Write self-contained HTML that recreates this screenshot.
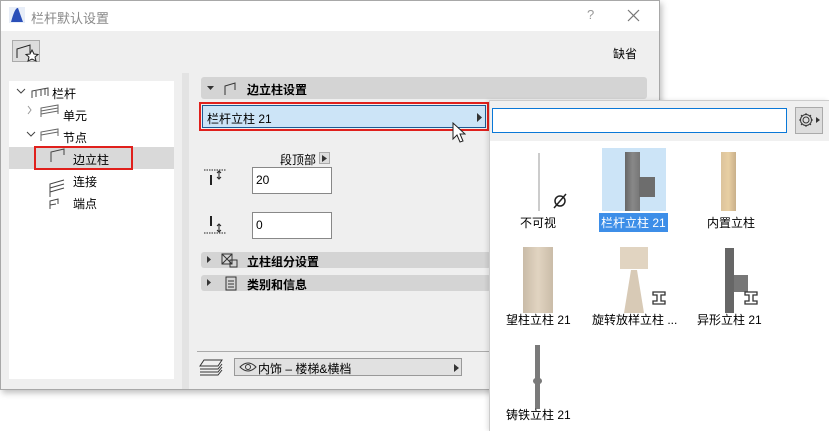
<!DOCTYPE html>
<html><head><meta charset="utf-8"><style>
*{box-sizing:border-box;margin:0;padding:0}
body{width:829px;height:431px;background:#fff;position:relative;overflow:hidden;font-family:"Liberation Sans","Noto Sans CJK SC",sans-serif;font-size:12px;color:#000}
.a{position:absolute}
.t{font-size:12px;white-space:nowrap}
.b{font-weight:bold}
</style></head><body>
<!-- dialog -->
<div class="a" style="left:0;top:0;width:660px;height:390px;background:#efefef;border:1px solid #a8a8a8;box-shadow:2px 3px 6px rgba(0,0,0,.25)"></div>
<div class="a" style="left:1px;top:1px;width:658px;height:30px;background:#fff"></div>
<svg class="a" style="left:9px;top:7px" width="16" height="16"><rect width="16" height="16" fill="#e8eef8"/><path d="M2 15 Q6 0 9 1 L14 15Z" fill="#2a4fb8"/></svg>
<div class="a t" style="left:31px;top:8px;color:#888;font-size:13px">栏杆默认设置</div>
<div class="a t" style="left:587px;top:7px;color:#999;font-size:13px">?</div>
<svg class="a" style="left:627px;top:9px" width="13" height="13"><path d="M1 1L12 12M12 1L1 12" stroke="#777" stroke-width="1.2"/></svg>
<div class="a" style="left:12px;top:40px;width:28px;height:22px;background:#ddd;border:1px solid #aaa"></div>
<svg class="a" style="left:13px;top:41px" width="27" height="21"><path d="M4 17V8L17 4V12" stroke="#222" fill="none"/><path d="M19 9l2 4 4 .5-3 2.5 1 4-4-2-4 2 1-4-3-2.5 4-.5z" fill="#fff" stroke="#222"/></svg>
<div class="a t b" style="left:613px;top:45px;font-weight:normal">缺省</div>
<!-- tree -->
<div class="a" style="left:9px;top:81px;width:165px;height:298px;background:#fff"></div>
<div class="a" style="left:182px;top:73px;width:7px;height:316px;background:#e3e3e3"></div>
<div class="a" style="left:9px;top:147px;width:165px;height:22px;background:#d9d9d9"></div>
<div class="a" style="left:34px;top:146px;width:99px;height:24px;border:2px solid #e0201c"></div>
<svg class="a" style="left:14px;top:84px" width="170" height="130" fill="none" stroke="#444">
<path d="M3 5l4 4 4-4"/><path d="M18 14V7l16-3v8M22 7v6M27 6v6M31 5v6" stroke-width="1"/>
<path d="M14 22l3 4-3 4" stroke="#999"/><path d="M27 33V24l17-3v9M27 27l17-3M27 30l17-3" stroke="#666"/>
<path d="M13 48l4 4 4-4"/><path d="M27 57V48l17-3v7M27 51l17-3" stroke="#666"/>
<path d="M37 78V68l13-3v6"/>
<path d="M36 113V100l14-4M36 104l14-4M36 108l14-4"/>
<path d="M36 125V117l8-2v5M36 121l6-1" />
</svg>
<div class="a t" style="left:52px;top:85px">栏杆</div>
<div class="a t" style="left:63px;top:107px">单元</div>
<div class="a t" style="left:63px;top:129px">节点</div>
<div class="a t" style="left:73px;top:151px">边立柱</div>
<div class="a t" style="left:73px;top:173px">连接</div>
<div class="a t" style="left:73px;top:195px">端点</div>
<!-- right panel -->
<div class="a" style="left:201px;top:77px;width:446px;height:22px;background:#d4d4d4;border-radius:3px"></div>
<svg class="a" style="left:205px;top:80px" width="40" height="16"><path d="M2 6h7l-3.5 4z" fill="#333"/><path d="M20 15V6l10-3v7" stroke="#333" fill="none"/></svg>
<div class="a t b" style="left:247px;top:81px">边立柱设置</div>
<div class="a" style="left:199px;top:102px;width:290px;height:29px;border:2px solid #e0201c"></div>
<div class="a" style="left:202px;top:105px;width:284px;height:23px;background:#cce4f7;border:1px solid #1c5b94"></div>
<div class="a t" style="left:207px;top:110px">栏杆立柱 21</div>
<svg class="a" style="left:477px;top:113px" width="6" height="9"><path d="M0 0l5 4.5L0 9z" fill="#333"/></svg>
<svg class="a" style="left:452px;top:122px" width="14" height="22"><path d="M1 1v16l4-4 3 7 3-1-3-7h5z" fill="#fff" stroke="#222"/></svg>
<div class="a t" style="left:280px;top:151px">段顶部</div>
<div class="a" style="left:319px;top:152px;width:11px;height:12px;background:#ddd;border:1px solid #aaa"></div>
<svg class="a" style="left:322px;top:155px" width="6" height="7"><path d="M0 0l5 3.5L0 7z" fill="#333"/></svg>
<svg class="a" style="left:204px;top:169px" width="26" height="78" stroke="#222" fill="none"><path d="M0 1h22" stroke-dasharray="1.5 1"/><path d="M7 6v10" stroke-width="2"/><path d="M15 3v6M13 4l2-2 2 2M13 8l2 2 2-2"/><path d="M7 47v10" stroke-width="2"/><path d="M0 64h22" stroke-dasharray="1.5 1"/><path d="M15 56v6M13 57l2-2 2 2M13 61l2 2 2-2"/></svg>
<div class="a" style="left:252px;top:167px;width:80px;height:27px;background:#fff;border:1px solid #888"></div>
<div class="a t" style="left:256px;top:173px">20</div>
<div class="a" style="left:252px;top:212px;width:80px;height:27px;background:#fff;border:1px solid #888"></div>
<div class="a t" style="left:256px;top:218px">0</div>
<div class="a" style="left:201px;top:252px;width:290px;height:16px;background:#d4d4d4;border-radius:3px"></div>
<div class="a" style="left:201px;top:275px;width:290px;height:16px;background:#d4d4d4;border-radius:3px"></div>
<svg class="a" style="left:205px;top:253px" width="40" height="40" stroke="#333" fill="none"><path d="M2 3l4 3.5-4 3.5z" fill="#333" stroke="none"/><path d="M2 26l4 3.5-4 3.5z" fill="#333" stroke="none"/><rect x="17" y="1" width="10" height="10"/><path d="M17 1l10 10M27 1L17 11"/><rect x="25" y="7" width="7" height="7"/><rect x="21" y="24" width="10" height="13"/><path d="M23 28h6M23 31h6M23 34h6"/></svg>
<div class="a t b" style="left:247px;top:253px">立柱组分设置</div>
<div class="a t b" style="left:247px;top:276px">类别和信息</div>
<div class="a" style="left:197px;top:351px;width:450px;height:1px;background:#aaa"></div>
<svg class="a" style="left:198px;top:358px" width="26" height="18" stroke="#333" fill="none"><path d="M6 2h18l-4 6H2zM2 11h18l4-5M2 14h18l4-5M2 17h18l4-5"/></svg>
<div class="a" style="left:234px;top:358px;width:228px;height:18px;background:#e1e1e1;border:1px solid #999"></div>
<svg class="a" style="left:239px;top:361px" width="18" height="12" stroke="#333" fill="none"><path d="M1 6Q9 -2 17 6Q9 14 1 6z"/><circle cx="9" cy="6" r="2.5"/></svg>
<div class="a t" style="left:258px;top:360px">内饰 – 楼梯&amp;横档</div>
<svg class="a" style="left:454px;top:364px" width="5" height="8"><path d="M0 0l5 4L0 8z" fill="#333"/></svg>
<!-- popup -->
<div class="a" style="left:489px;top:100px;width:340px;height:331px;background:#fff;border-left:1px solid #ccc;border-top:1px solid #ccc;box-shadow:-2px 0 4px rgba(0,0,0,.1)"></div>
<div class="a" style="left:490px;top:101px;width:339px;height:40px;background:#f0f0f0"></div>
<div class="a" style="left:492px;top:108px;width:295px;height:25px;background:#fff;border:1px solid #0a78d7"></div>
<div class="a" style="left:795px;top:107px;width:28px;height:27px;background:#ddd;border:1px solid #aaa"></div>
<svg class="a" style="left:797px;top:110px" width="25" height="20" stroke="#333" fill="none"><circle cx="9" cy="10" r="3"/><path d="M9 3v2M9 15v2M2 10h2M14 10h2M4 5l1.5 1.5M12.5 13.5L14 15M4 15l1.5-1.5M12.5 6.5L14 5"/><circle cx="9" cy="10" r="5.5"/><path d="M19 7l4 3-4 3z" fill="#333" stroke="none"/></svg>
<!-- items -->
<div class="a" style="left:538px;top:153px;width:2px;height:58px;background:#ccc"></div>
<svg class="a" style="left:552px;top:193px" width="16" height="16" stroke="#222" fill="none" stroke-width="1.5"><circle cx="8" cy="8" r="5"/><path d="M2 15L14 1"/></svg>
<div class="a t" style="left:520px;top:214px">不可视</div>
<div class="a" style="left:602px;top:148px;width:64px;height:63px;background:#cce4f7"></div>
<div class="a" style="left:625px;top:152px;width:15px;height:59px;background:linear-gradient(90deg,#666,#888 50%,#777)"></div>
<div class="a" style="left:639px;top:177px;width:16px;height:20px;background:#6d6d6d"></div>
<div class="a t" style="left:599px;top:213px;background:#3d8ee8;color:#fff;padding:1px 2px">栏杆立柱 21</div>
<div class="a" style="left:721px;top:152px;width:15px;height:59px;background:linear-gradient(90deg,#dcc39b,#e8cfa3 50%,#c9b08a)"></div>
<div class="a t" style="left:707px;top:214px">内置立柱</div>
<div class="a" style="left:523px;top:247px;width:30px;height:66px;background:linear-gradient(90deg,#c9bba7,#e1d4c1 50%,#cabca8)"></div>
<div class="a t" style="left:506px;top:311px">望柱立柱 21</div>
<div class="a" style="left:620px;top:247px;width:28px;height:22px;background:#e1d4c1"></div>
<div class="a" style="left:624px;top:270px;width:20px;height:43px;background:#d8cab6;clip-path:polygon(35% 0,65% 0,100% 100%,0 100%)"></div>
<div class="a t" style="left:592px;top:311px">旋转放样立柱 ...</div>
<div class="a" style="left:725px;top:248px;width:9px;height:65px;background:#666"></div>
<div class="a" style="left:734px;top:275px;width:14px;height:17px;background:#777"></div>
<svg class="a" style="left:650px;top:290px" width="120" height="16" stroke="#333" fill="#fff" stroke-width="1.3"><path d="M3 2h12v3h-4v6h4v3H3v-3h4V5H3z"/><path d="M95 2h12v3h-4v6h4v3H95v-3h4V5h-4z"/></svg>
<div class="a t" style="left:697px;top:311px">异形立柱 21</div>
<div class="a" style="left:535px;top:345px;width:5px;height:64px;background:#7a7a7a"></div>
<div class="a" style="left:533px;top:378px;width:9px;height:6px;background:#7a7a7a;border-radius:3px"></div>
<div class="a t" style="left:506px;top:406px">铸铁立柱 21</div>
</body></html>
